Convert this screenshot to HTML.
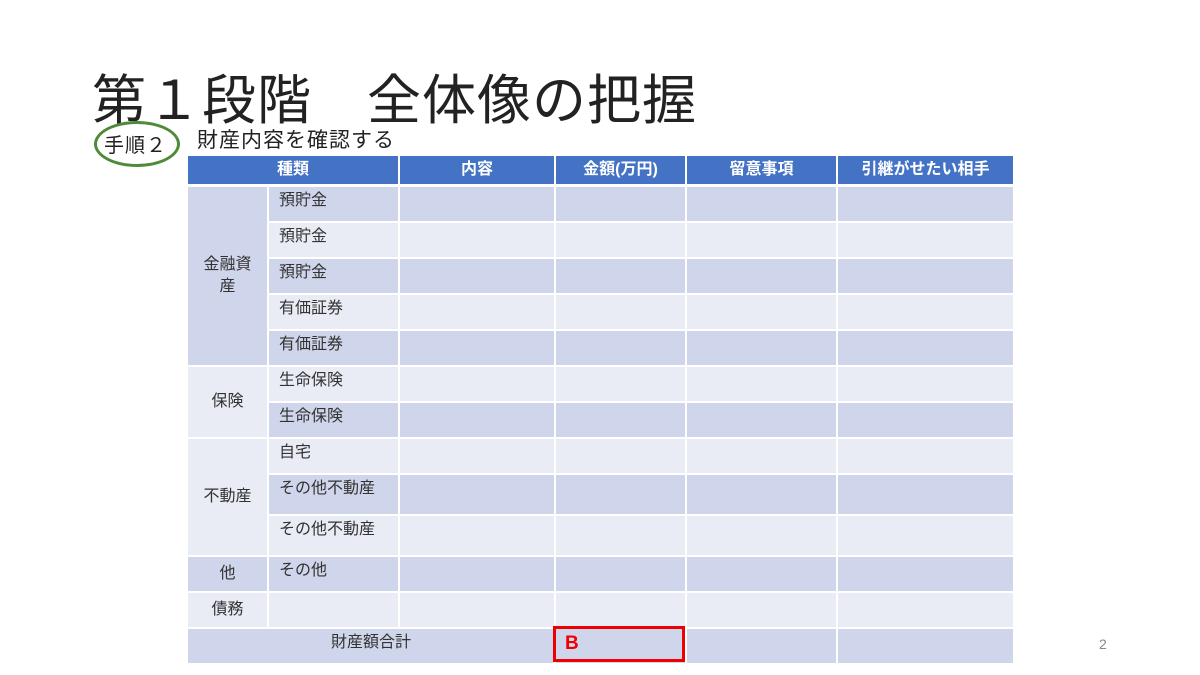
<!DOCTYPE html>
<html><head><meta charset="utf-8"><style>
body{margin:0;width:1200px;height:675px;background:#fff;position:relative;overflow:hidden;font-family:"Liberation Sans","Noto Sans CJK JP",sans-serif;color:#333}
.t{position:absolute;left:92px;top:56px;font-size:54px;color:#222;white-space:nowrap;letter-spacing:1px}
.sub{position:absolute;left:197px;top:124px;font-size:21px;color:#222;letter-spacing:1px}
.ell{position:absolute;left:94px;top:121px;width:80px;height:40px;border:3px solid #4e8a3a;border-radius:50%}
.ellt{position:absolute;left:104px;top:129px;font-size:20px;color:#222;letter-spacing:1px}
table{position:absolute;left:186px;top:154px;border-collapse:collapse;table-layout:fixed;font-size:16px}
td,th{border:2px solid #fff;padding:0 0 0 10px;vertical-align:top;line-height:28px}
th{background:#4472c4;color:#fff;font-weight:bold;text-align:center;height:28px;padding:0;border-bottom:3px solid #fff}
.d td{background:#cfd5ea}.l td{background:#e9ebf5}
td.g{text-align:center;vertical-align:middle;padding:0;line-height:22px}
.gd{background:#cfd5ea!important}.gl{background:#e9ebf5!important}
.pn{position:absolute;left:1099px;top:636px;font-size:14px;color:#888}
.red{position:absolute;left:553px;top:626px;width:132px;height:36px;border:3px solid #e00;color:#e00;font-weight:bold;font-size:19px;padding-left:9px;box-sizing:border-box;line-height:30px}
</style></head><body>
<div class="t">第１段階　全体像の把握</div>
<div class="ell"></div><div class="ellt">手順２</div>
<div class="sub">財産内容を確認する</div>
<table>
<colgroup><col style="width:81px"><col style="width:131px"><col style="width:156px"><col style="width:131px"><col style="width:151px"><col style="width:177px"></colgroup>
<tr><th colspan="2">種類</th><th>内容</th><th>金額(万円)</th><th>留意事項</th><th>引継がせたい相手</th></tr>
<tr class="d" style="height:36px"><td class="g gd" rowspan="5">金融資<br>産</td><td>預貯金</td><td></td><td></td><td></td><td></td></tr>
<tr class="l" style="height:36px"><td>預貯金</td><td></td><td></td><td></td><td></td></tr>
<tr class="d" style="height:36px"><td>預貯金</td><td></td><td></td><td></td><td></td></tr>
<tr class="l" style="height:36px"><td>有価証券</td><td></td><td></td><td></td><td></td></tr>
<tr class="d" style="height:36px"><td>有価証券</td><td></td><td></td><td></td><td></td></tr>
<tr class="l" style="height:36px"><td class="g gl" rowspan="2">保険</td><td>生命保険</td><td></td><td></td><td></td><td></td></tr>
<tr class="d" style="height:36px"><td>生命保険</td><td></td><td></td><td></td><td></td></tr>
<tr class="l" style="height:36px"><td class="g gl" rowspan="3">不動産</td><td>自宅</td><td></td><td></td><td></td><td></td></tr>
<tr class="d" style="height:41px"><td>その他不動産</td><td></td><td></td><td></td><td></td></tr>
<tr class="l" style="height:41px"><td>その他不動産</td><td></td><td></td><td></td><td></td></tr>
<tr class="d" style="height:36px"><td class="g gd">他</td><td>その他</td><td></td><td></td><td></td><td></td></tr>
<tr class="l" style="height:36px"><td class="g gl">債務</td><td></td><td></td><td></td><td></td><td></td></tr>
<tr class="d" style="height:36px"><td colspan="3" style="text-align:center;padding-left:0">財産額合計</td><td></td><td></td><td></td></tr>
</table>
<div class="red">B</div>
<div class="pn">2</div>
</body></html>
